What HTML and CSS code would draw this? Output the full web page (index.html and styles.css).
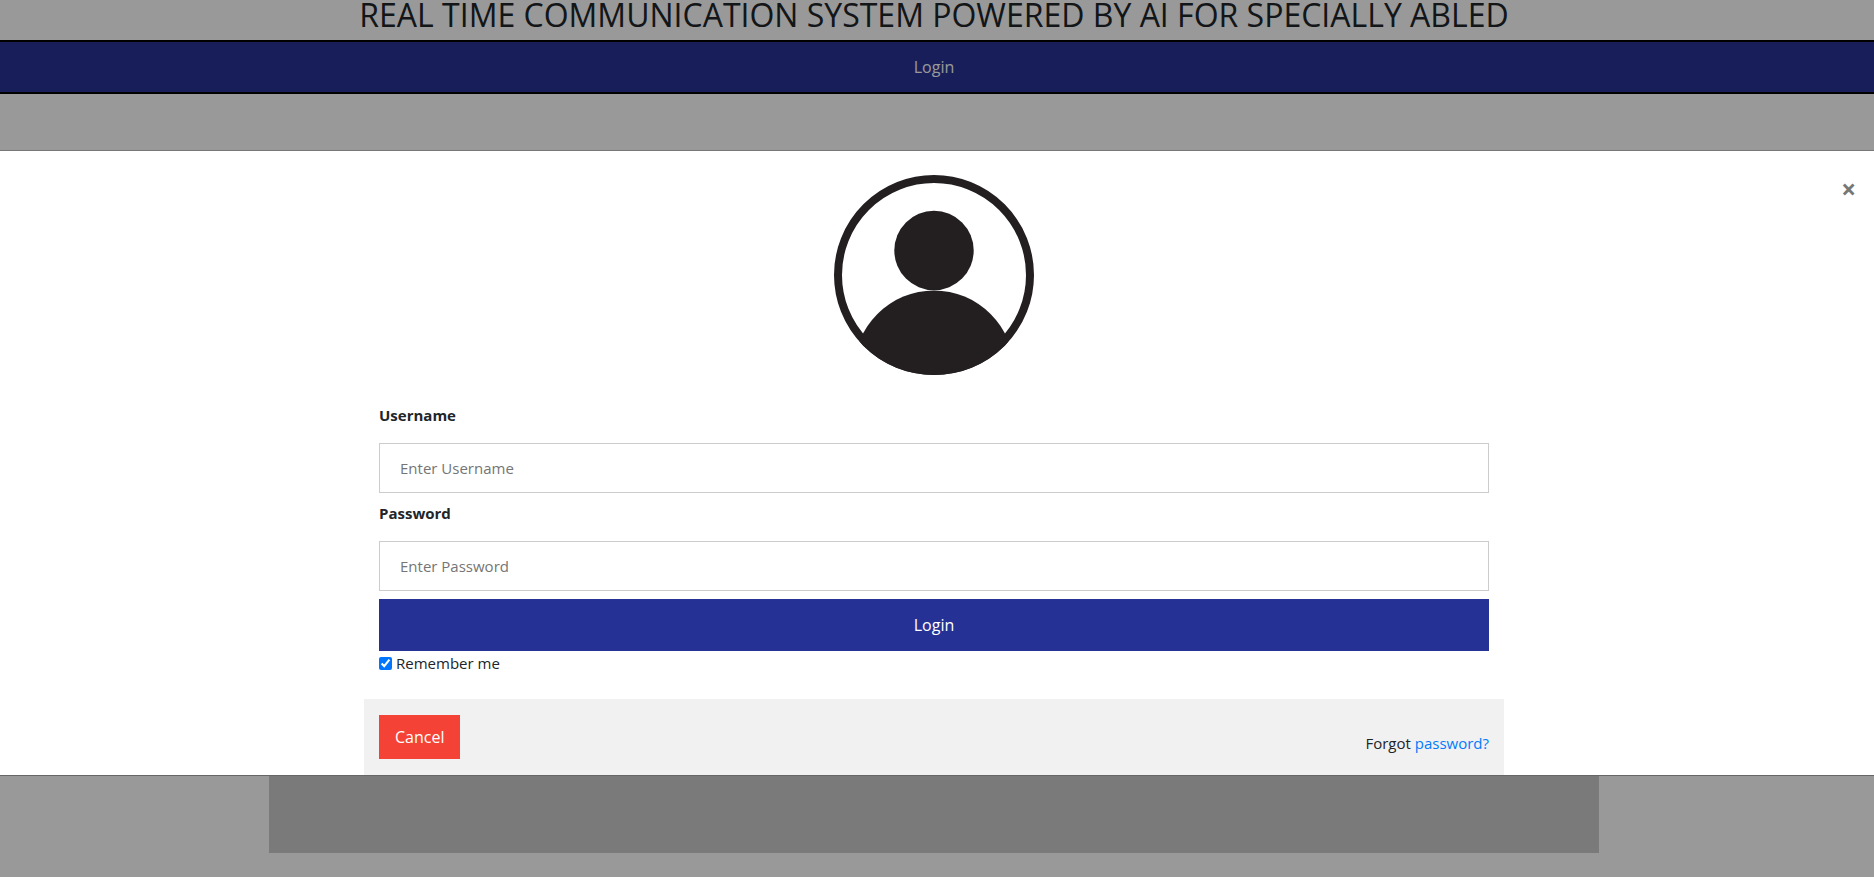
FILE: index.html
```html
<!DOCTYPE html>
<html lang="en">
<head>
<meta charset="utf-8">
<meta name="viewport" content="width=device-width, initial-scale=1">
<title>Login</title>
<link rel="stylesheet" href="styles.css">
</head>
<body>
<div class="page">
  <h1 class="title">REAL TIME COMMUNICATION SYSTEM POWERED BY AI FOR SPECIALLY ABLED</h1>
  <nav class="navbar"><a class="nav-link" href="#login">Login</a></nav>
  <main class="panel"></main>
</div>
<div class="modal" id="login" role="dialog" aria-label="Login">
  <form class="modal-content">
    <button class="close" type="button" aria-label="Close">×</button>
    <svg class="avatar" viewBox="0 0 200 200" role="img" aria-label="Avatar">
      <clipPath id="disc"><circle cx="100" cy="100" r="100"/></clipPath>
      <circle cx="100" cy="100" r="96" fill="none" stroke="#231f20" stroke-width="8"/>
      <circle cx="100" cy="75.500" r="39.700" fill="#231f20"/>
      <circle cx="100" cy="195.500" r="80" fill="#231f20" clip-path="url(#disc)"/>
    </svg>
    <div class="container fields">
      <label class="field-label" for="uname">Username</label>
      <input class="field" id="uname" type="text" placeholder="Enter Username">
      <label class="field-label" for="psw">Password</label>
      <input class="field" id="psw" type="password" placeholder="Enter Password">
      <button class="submit" type="button">Login</button>
      <label class="remember"><input class="check" type="checkbox" checked> Remember me</label>
    </div>
    <div class="container footer">
      <button class="cancel" type="button">Cancel</button>
      <p class="forgot">Forgot <a class="link" href="#forgot">password?</a></p>
    </div>
  </form>
</div>
</body>
</html>
```
FILE: styles.css
```css
* {
  box-sizing: border-box;
}

body {
  margin: 0;
  font: 15px/24px "Segoe UI", "Open Sans", "Noto Sans", sans-serif;
  color: #212529;
  background: #fff;
}

.page {
  display: flex;
  flex-direction: column;
  min-height: 100vh;
  padding-bottom: 24px;
}

.title {
  margin: 0;
  padding: 0 6px 10px 0;
  font-size: 32px;
  font-weight: 500;
  line-height: 30px;
  text-align: center;
  white-space: nowrap;
}

.navbar {
  display: flex;
  justify-content: center;
  padding: 13px 6px 13px 0;
  background: #283296;
  border-top: 2px solid #000;
  border-bottom: 2px solid #000;
}

.nav-link {
  font-size: 16px;
  color: #fff;
  text-decoration: none;
}

.panel {
  flex: 1;
  align-self: center;
  width: 71%;
  margin: 80px 6px 0 0;
  background: #cbcbcb;
}

.modal {
  position: fixed;
  inset: 0;
  padding-top: 150px;
  overflow: hidden;
  background: rgba(0, 0, 0, 0.4);
}

.modal-content {
  position: relative;
  display: flex;
  flex-direction: column;
  align-items: center;
  padding: 24px 6px 0 0;
  background: #fff;
  border-top: 1px solid #777;
  border-bottom: 1px solid #666;
}

.close {
  position: absolute;
  top: 23px;
  right: 18px;
  padding: 0;
  font: bold 26px/30px "Segoe UI", "Open Sans", sans-serif;
  color: #777;
  background: none;
  border: 0;
}

.avatar {
  width: 200px;
  height: 200px;
}

.container {
  display: flex;
  width: 100%;
  max-width: 1140px;
  padding: 16px 15px;
}

.fields {
  flex-direction: column;
  padding-top: 28px;
  padding-bottom: 24px;
}

.field-label {
  margin-bottom: 16px;
  font-weight: bold;
}

.field {
  height: 50px;
  margin-bottom: 8px;
  padding: 0 20px;
  font: inherit;
  border: 1px solid #ccc;
}

.field::placeholder {
  color: #757575;
}

.submit,
.cancel {
  font: inherit;
  font-size: 16px;
  font-weight: 500;
  color: #fff;
  border: 0;
}

.submit {
  height: 52px;
  background: #263196;
}

.remember {
  display: flex;
  align-items: center;
  align-self: flex-start;
  gap: 4px;
}

.check {
  width: 13px;
  height: 13px;
  margin: 0;
  accent-color: #0075ff;
}

.footer {
  align-items: center;
  justify-content: space-between;
  background: #f1f1f1;
}

.cancel {
  height: 44px;
  padding: 0 16px;
  background: #f44336;
}

.forgot {
  margin: 12px 0 0;
}

.link {
  color: #007bff;
  text-decoration: none;
}
```
